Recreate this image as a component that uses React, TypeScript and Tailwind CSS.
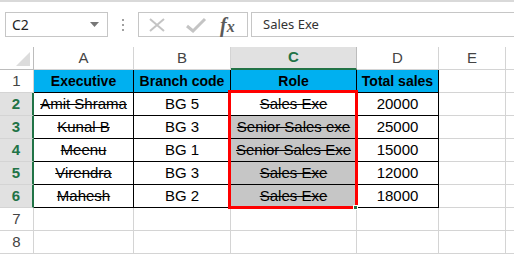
import React from "react";

const F = { fontFamily: '"Liberation Sans", Arial, sans-serif' };

type Cell = { t: string; bg?: string; bold?: boolean; strike?: boolean; black?: boolean };

const widths = [34, 100, 97, 126, 82, 67, 20];

function HeaderRow() {
  const letters = ["", "A", "B", "C", "D", "E", ""];
  return (
    <div className="flex h-[23px]">
      <div className="w-[34px] h-[23px] border-r border-b border-[#bcbcbc] bg-white relative shrink-0">
        <svg width="16" height="16" className="absolute right-[2px] bottom-[2px]">
          <polygon points="15,1 15,15 1,15" fill="#dcdcdc" />
        </svg>
      </div>
      {letters.slice(1).map((l, i) => {
        const sel = l === "C";
        return (
          <div
            key={i}
            style={{ width: widths[i + 1] }}
            className={
              "h-[23px] shrink-0 border-r flex items-center justify-center text-[15px] " +
              (sel
                ? "bg-[#e1e1e1] border-b-2 border-b-[#217346] border-r-[#bcbcbc] text-[#217346] font-bold"
                : "bg-white border-b border-[#d4d4d4] text-[#444]")
            }
          >
            <span className={sel ? "" : "mt-[1px]"}>{l}</span>
          </div>
        );
      })}
    </div>
  );
}

function Row({ n, cells, sel }: { n: number; cells: Cell[]; sel?: boolean }) {
  return (
    <div className="flex h-[23px]">
      <div
        className={
          "w-[34px] h-[23px] shrink-0 border-b flex items-center justify-center text-[15px] " +
          (sel
            ? "bg-[#e1e1e1] text-[#217346] font-bold border-r-2 border-r-[#217346] border-b-[#d4d4d4]"
            : "bg-white text-[#444] border-r border-[#d4d4d4]")
        }
      >
        {n}
      </div>
      {widths.slice(1).map((w, i) => {
        const c = cells[i];
        const inTable = i < 4 && cells.length > 0;
        return (
          <div
            key={i}
            style={{ width: w, background: c?.bg ?? "#fff" }}
            className={
              "h-[23px] shrink-0 border-r border-b flex items-center justify-center overflow-hidden whitespace-nowrap " +
              (inTable ? "border-black " : "border-[#d4d4d4] ") +
              (c?.bold ? "font-bold text-[14px] " : "text-[15px] ") +
              (c?.strike ? "line-through " : "")
            }
          >
            <span className="text-black">{c?.t ?? ""}</span>
          </div>
        );
      })}
    </div>
  );
}

export default function App() {
  const blue = "#00b0f0";
  const gray = "#c6c6c6";
  const data: [string, string, string, string][] = [
    ["Amit Shrama", "BG 5", "Sales Exe", "20000"],
    ["Kunal B", "BG 3", "Senior Sales exe", "25000"],
    ["Meenu", "BG 1", "Senior Sales Exe", "15000"],
    ["Virendra", "BG 3", "Sales Exe", "12000"],
    ["Mahesh", "BG 2", "Sales Exe", "18000"],
  ];
  return (
    <div className="w-[514px] h-[254px] bg-white overflow-hidden relative" style={F}>
      {/* toolbar */}
      <div className="h-[47px] border-t-2 border-[#d9d9d9] flex items-start pt-[10px]">
        <div className="ml-[5px] w-[103px] h-[25px] border border-[#c6c6c6] flex items-center justify-between px-[6px]">
          <span className="text-[14px] text-[#222]" style={{ fontFamily: '"Noto Sans", sans-serif' }}>C2</span>
          <svg width="9" height="5" className="mr-[2px]">
            <polygon points="0,0 9,0 4.5,5" fill="#777" />
          </svg>
        </div>
        <div className="w-[30px] h-[25px] flex flex-col items-center justify-center gap-[3px]">
          <div className="w-[2px] h-[2px] bg-[#a0a0a0]" />
          <div className="w-[2px] h-[2px] bg-[#a0a0a0]" />
          <div className="w-[2px] h-[2px] bg-[#a0a0a0]" />
        </div>
        <div className="w-[110px] h-[25px] border border-[#c6c6c6] flex items-center">
          <svg width="20" height="16" className="ml-[8px]">
            <path d="M3 2 L17 14 M17 2 L3 14" stroke="#c4c4c4" strokeWidth="2" fill="none" />
          </svg>
          <svg width="22" height="16" className="ml-[18px]">
            <path d="M2 9 L8 14 L20 2" stroke="#c4c4c4" strokeWidth="3" fill="none" />
          </svg>
          <span
            className="ml-[13px] italic font-bold text-[#5a5a5a] leading-none"
            style={{ fontFamily: '"Liberation Serif", serif' }}
          >
            <span className="text-[20px]">f</span>
            <span className="text-[16px]">x</span>
          </span>
        </div>
        <div className="ml-[3px] flex-1 h-[25px] border border-[#c6c6c6] border-r-0 flex items-center pl-[11px]">
          <span className="text-[13px] text-[#333]" style={{ fontFamily: '"Noto Sans", sans-serif' }}>
            Sales Exe
          </span>
        </div>
      </div>

      {/* grid */}
      <HeaderRow />
      <Row
        n={1}
        cells={[
          { t: "Executive", bg: blue, bold: true },
          { t: "Branch code", bg: blue, bold: true },
          { t: "Role", bg: blue, bold: true },
          { t: "Total sales", bg: blue, bold: true },
        ]}
      />
      {data.map((d, i) => (
        <Row
          key={i}
          n={i + 2}
          sel
          cells={[
            { t: d[0], strike: true },
            { t: d[1] },
            { t: d[2], strike: true, bg: i === 0 ? "#fff" : gray },
            { t: d[3] },
          ]}
        />
      ))}
      <Row n={7} cells={[]} />
      <Row n={8} cells={[]} />

      {/* selection overlay */}
      <div className="absolute left-[228px] top-[90px] w-[130px] h-[119px] border-[3px] border-[#ff0000]" />
      <div className="absolute left-[353px] top-[205px] w-[5px] h-[5px] bg-[#217346] border border-white" />
    </div>
  );
}
